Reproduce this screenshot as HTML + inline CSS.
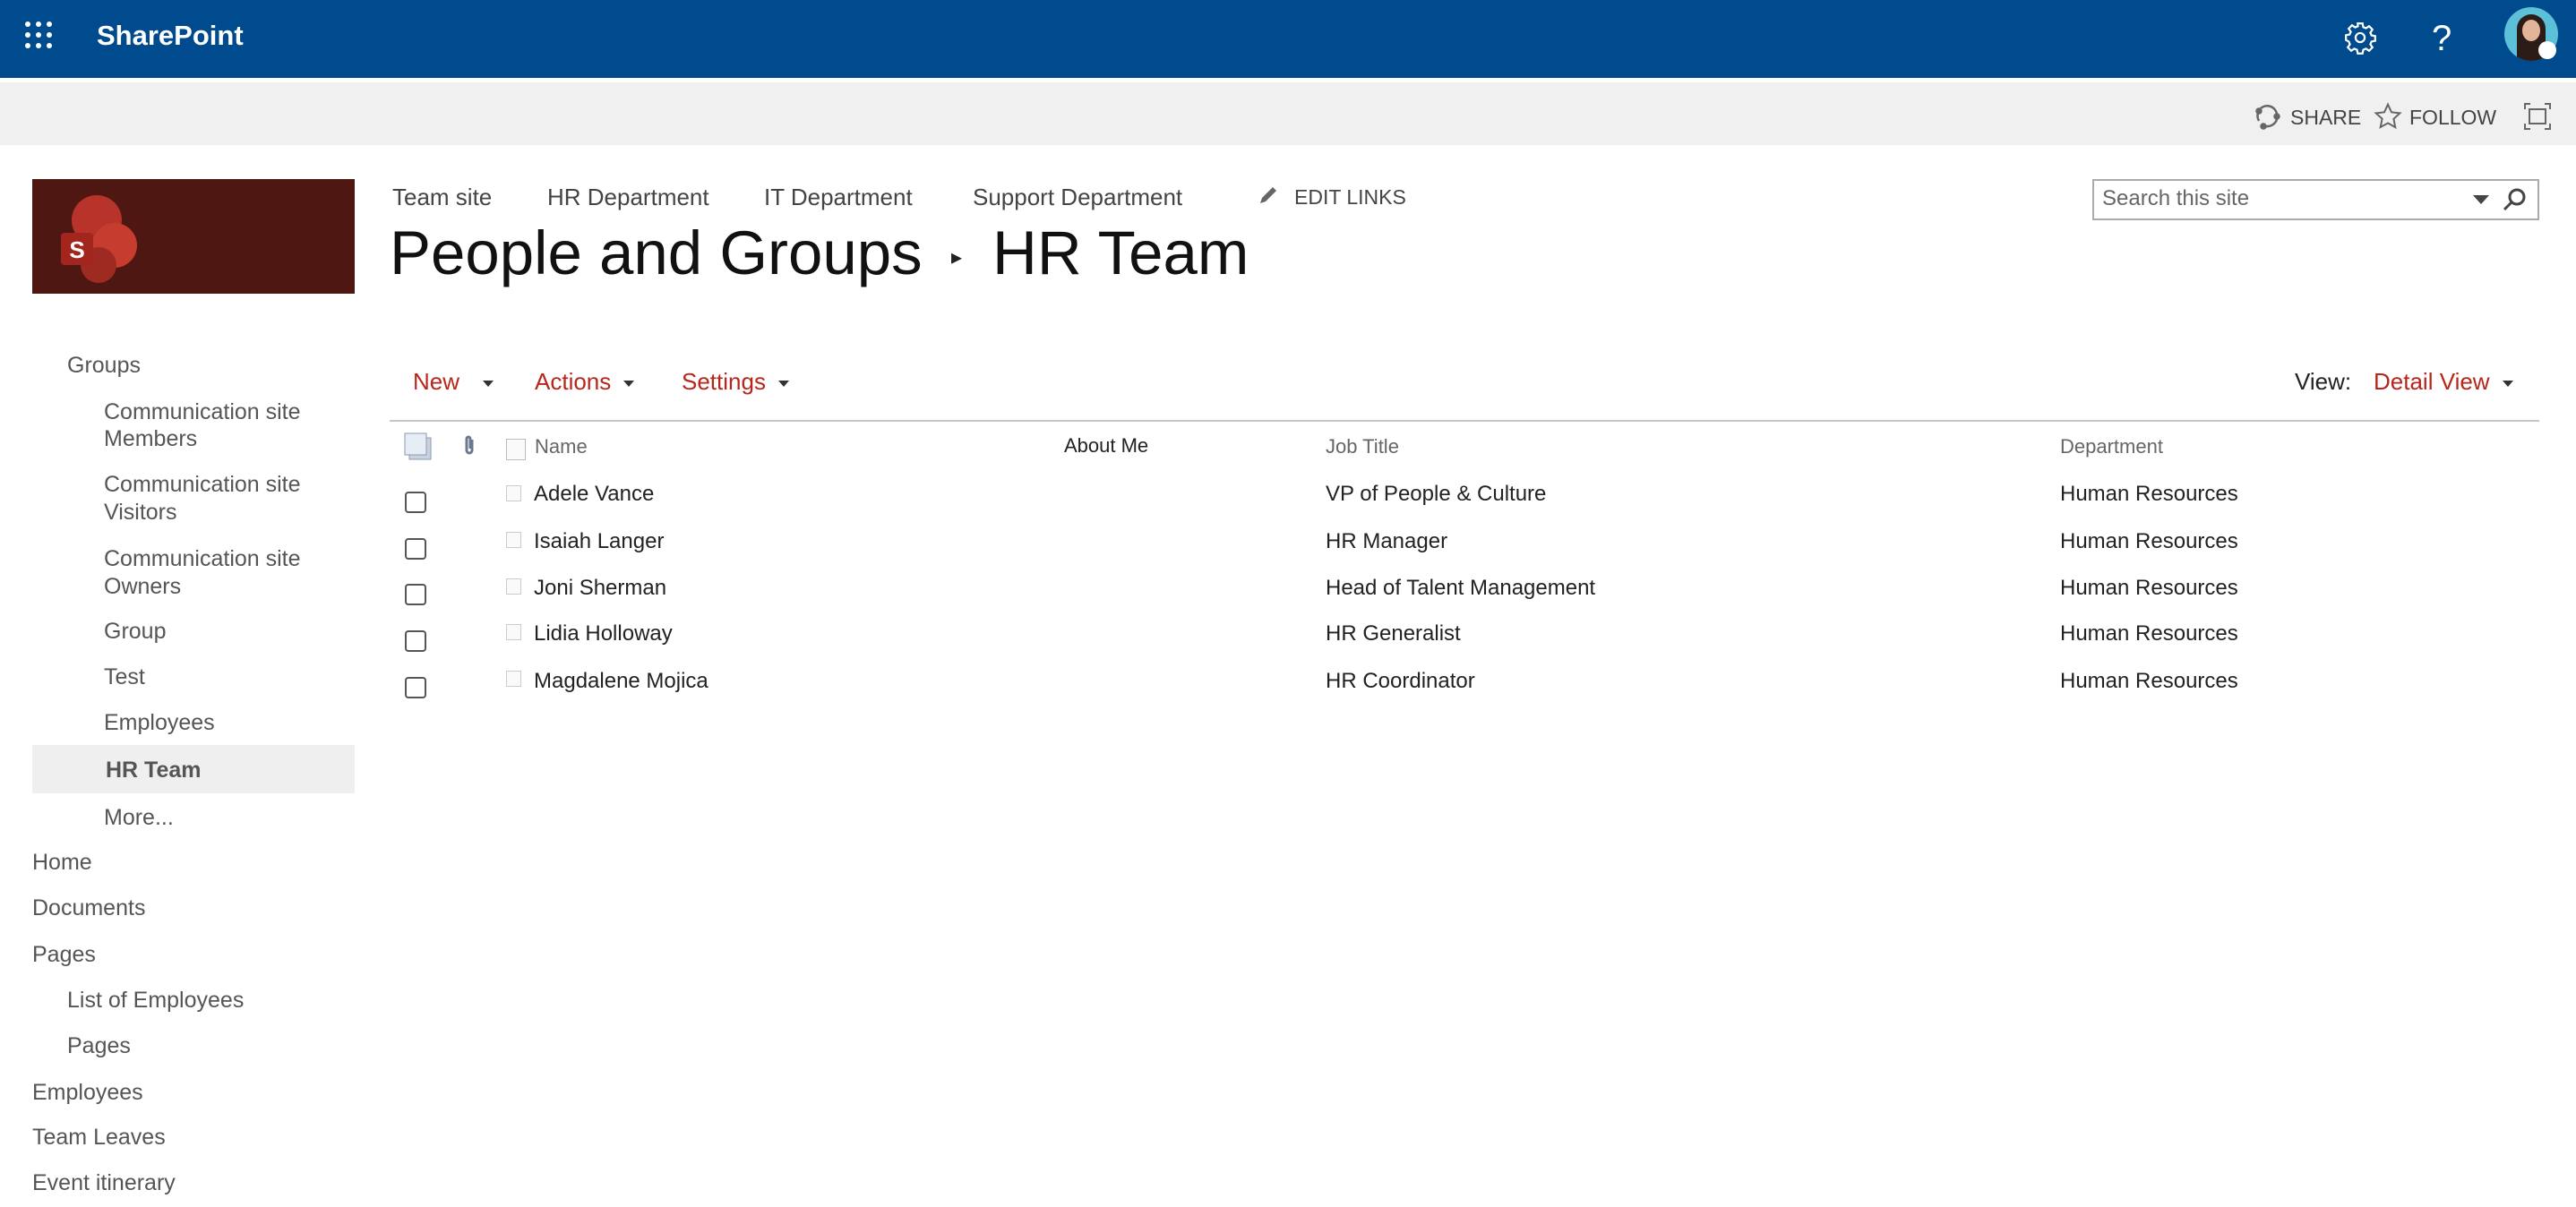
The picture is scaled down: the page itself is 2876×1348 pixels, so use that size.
<!DOCTYPE html>
<html><head><meta charset="utf-8"><style>
*{margin:0;padding:0;box-sizing:border-box}
body{width:2876px;height:1348px;overflow:hidden;background:#fff;font-family:"Liberation Sans",sans-serif;position:relative}
.t{position:absolute;white-space:nowrap;line-height:40px;height:40px}
.nav{color:#555;font-size:25px}
.row{color:#222;font-size:24px}
.hd{color:#666;font-size:22px}
.red{color:#b8261b;font-size:26px}
.cb{position:absolute;width:24px;height:24px;border:2px solid #555;border-radius:4px;left:452px}
.sq{position:absolute;width:17px;height:18px;border:1px solid #ccc;left:565px;background:#fafafa}
.arr{display:inline-block;width:0;height:0;border-left:6px solid transparent;border-right:6px solid transparent;border-top:7px solid #333;vertical-align:middle;margin-left:14px}
</style></head><body>
<div style="position:absolute;left:0;top:0;width:2876px;height:87px;background:#004b8e"></div>
<svg style="position:absolute;left:26px;top:22px" width="36" height="36" viewBox="0 0 36 36" fill="#fff">
<circle cx="5" cy="5" r="3"/><circle cx="17" cy="5" r="3"/><circle cx="29" cy="5" r="3"/>
<circle cx="5" cy="17" r="3"/><circle cx="17" cy="17" r="3"/><circle cx="29" cy="17" r="3"/>
<circle cx="5" cy="29" r="3"/><circle cx="17" cy="29" r="3"/><circle cx="29" cy="29" r="3"/></svg>
<div class="t" style="left:108px;top:20px;color:#fff;font-size:31px;font-weight:bold">SharePoint</div>
<svg style="position:absolute;left:2616px;top:23px" width="38" height="38" viewBox="0 0 24 24" fill="none" stroke="#fff" stroke-width="1.4"><circle cx="12" cy="12" r="3.2"/><path d="M10.3 2h3.4l.5 2.6 1.9.8 2.2-1.5 2.4 2.4-1.5 2.2.8 1.9 2.6.5v3.4l-2.6.5-.8 1.9 1.5 2.2-2.4 2.4-2.2-1.5-1.9.8-.5 2.6h-3.4l-.5-2.6-1.9-.8-2.2 1.5-2.4-2.4 1.5-2.2-.8-1.9L2 13.7v-3.4l2.6-.5.8-1.9-1.5-2.2 2.4-2.4 2.2 1.5 1.9-.8z"/></svg>
<div class="t" style="left:2715px;top:18px;color:#fff;font-size:40px;height:50px;line-height:50px;font-weight:lighter">?</div>
<div style="position:absolute;left:2796px;top:8px;width:60px;height:60px;border-radius:50%;background:#5bc0d8;overflow:hidden"><div style="position:absolute;left:14px;top:8px;width:32px;height:60px;border-radius:16px 16px 0 0;background:#2b1c17"></div><div style="position:absolute;left:20px;top:14px;width:20px;height:24px;border-radius:50%;background:#e2b59a"></div></div>
<div style="position:absolute;left:2834px;top:46px;width:20px;height:20px;border-radius:50%;background:#fff"></div>
<div style="position:absolute;left:0;top:92px;width:2876px;height:70px;background:#f0f0f0"></div>
<svg style="position:absolute;left:2516px;top:115px" width="30" height="30" viewBox="0 0 30 30" fill="none" stroke="#666" stroke-width="2.5"><path d="M8 6A11 11 0 0 1 26 12"/><path d="M26 18A11 11 0 0 1 14 26"/><path d="M6 20A11 11 0 0 1 5 11"/><circle cx="6" cy="9" r="2.5" fill="#666"/><circle cx="26" cy="15" r="2.5" fill="#666"/><circle cx="11" cy="26" r="2.5" fill="#666"/></svg>
<div class="t" style="left:2557px;top:111px;color:#444;font-size:23px">SHARE</div>
<svg style="position:absolute;left:2650px;top:114px" width="32" height="32" viewBox="0 0 24 24" fill="none" stroke="#666" stroke-width="1.5"><path d="M12 2l3 6.5 7 .8-5.2 4.8 1.4 7L12 17.6 5.8 21l1.4-7L2 9.3l7-.8z"/></svg>
<div class="t" style="left:2690px;top:111px;color:#444;font-size:23px">FOLLOW</div>
<svg style="position:absolute;left:2817px;top:114px" width="32" height="32" viewBox="0 0 32 32" fill="none" stroke="#666" stroke-width="2"><path d="M2 8V2h6M24 2h6v6M30 24v6h-6M8 30H2v-6"/><rect x="7" y="8" width="18" height="16"/></svg>

<div style="position:absolute;left:36px;top:200px;width:360px;height:128px;background:#4e1712"></div>
<svg style="position:absolute;left:60px;top:210px" width="110" height="112" viewBox="0 0 110 112"><circle cx="48" cy="36" r="28" fill="#b8332a"/><circle cx="68" cy="64" r="25" fill="#c63d30"/><circle cx="50" cy="86" r="20" fill="#9e2a22"/><rect x="8" y="50" width="36" height="36" rx="4" fill="#a3261e"/><text x="26" y="78" fill="#fff" font-family="Liberation Sans" font-weight="bold" font-size="26" text-anchor="middle">S</text></svg>

<div class="t nav" style="left:438px;top:200px;color:#444;font-size:26px">Team site</div>
<div class="t nav" style="left:611px;top:200px;color:#444;font-size:26px">HR Department</div>
<div class="t nav" style="left:853px;top:200px;color:#444;font-size:26px">IT Department</div>
<div class="t nav" style="left:1086px;top:200px;color:#444;font-size:26px">Support Department</div>
<svg style="position:absolute;left:1404px;top:206px" width="24" height="24" viewBox="0 0 24 24"><path d="M3 21l2-6L17 3l4 4L9 19z" fill="#666"/></svg>
<div class="t" style="left:1445px;top:200px;color:#444;font-size:23px">EDIT LINKS</div>
<div class="t" style="left:435px;top:238px;color:#111;font-size:69px;line-height:90px;height:90px">People and Groups</div>
<div class="t" style="left:1062px;top:268px;color:#222;font-size:24px">&#9656;</div>
<div class="t" style="left:1108px;top:238px;color:#111;font-size:69px;line-height:90px;height:90px">HR Team</div>

<div style="position:absolute;left:2336px;top:200px;width:499px;height:46px;border:2px solid #aaa;background:#fff"></div>
<div class="t" style="left:2347px;top:202px;color:#666;font-size:24px">Search this site</div>
<div style="position:absolute;left:2761px;top:218px;border-left:9px solid transparent;border-right:9px solid transparent;border-top:10px solid #444"></div>
<svg style="position:absolute;left:2792px;top:208px" width="30" height="30" viewBox="0 0 30 30" fill="none" stroke="#444" stroke-width="3"><circle cx="18" cy="12" r="8"/><path d="M12 18L4 26"/></svg>

<div style="position:absolute;left:36px;top:832px;width:360px;height:54px;background:#efefef"></div>
<div class="t nav" style="left:75px;top:388px">Groups</div>
<div class="t nav" style="left:116px;top:440px">Communication site</div>
<div class="t nav" style="left:116px;top:470px">Members</div>
<div class="t nav" style="left:116px;top:521px">Communication site</div>
<div class="t nav" style="left:116px;top:552px">Visitors</div>
<div class="t nav" style="left:116px;top:604px">Communication site</div>
<div class="t nav" style="left:116px;top:635px">Owners</div>
<div class="t nav" style="left:116px;top:685px">Group</div>
<div class="t nav" style="left:116px;top:736px">Test</div>
<div class="t nav" style="left:116px;top:787px">Employees</div>
<div class="t nav" style="left:118px;top:840px;font-weight:bold">HR Team</div>
<div class="t nav" style="left:116px;top:893px">More...</div>
<div class="t nav" style="left:36px;top:943px">Home</div>
<div class="t nav" style="left:36px;top:994px">Documents</div>
<div class="t nav" style="left:36px;top:1046px">Pages</div>
<div class="t nav" style="left:75px;top:1097px">List of Employees</div>
<div class="t nav" style="left:75px;top:1148px">Pages</div>
<div class="t nav" style="left:36px;top:1200px">Employees</div>
<div class="t nav" style="left:36px;top:1250px">Team Leaves</div>
<div class="t nav" style="left:36px;top:1301px">Event itinerary</div>

<div class="t red" style="left:461px;top:406px">New<span class="arr" style="margin-left:26px"></span></div>
<div class="t red" style="left:597px;top:406px">Actions<span class="arr"></span></div>
<div class="t red" style="left:761px;top:406px">Settings<span class="arr"></span></div>
<div class="t" style="left:2562px;top:406px;color:#222;font-size:26px">View:</div>
<div class="t red" style="left:2650px;top:406px">Detail View<span class="arr"></span></div>
<div style="position:absolute;left:435px;top:469px;width:2400px;height:2px;background:#c6c6c6"></div>

<svg style="position:absolute;left:450px;top:482px" width="36" height="36" viewBox="0 0 36 36"><rect x="7" y="7" width="24" height="24" fill="#c9d3e0" stroke="#8a9bb5"/><rect x="2" y="2" width="24" height="24" fill="#e7edf5" stroke="#8a9bb5"/></svg>
<svg style="position:absolute;left:516px;top:485px" width="16" height="26" viewBox="0 0 16 26" fill="none" stroke="#6a7890" stroke-width="3"><path d="M11 6v12a3 3 0 0 1-6 0V5a2 2 0 0 1 4 0v11"/></svg>
<div class="sq" style="top:490px;width:22px;height:24px;border-color:#bbb"></div>
<div class="t hd" style="left:597px;top:479px">Name</div>
<div class="t hd" style="left:1188px;top:478px;color:#222">About Me</div>
<div class="t hd" style="left:1480px;top:479px">Job Title</div>
<div class="t hd" style="left:2300px;top:479px">Department</div>

<div class="cb" style="top:549px"></div><div class="sq" style="top:542px"></div>
<div class="t row" style="left:596px;top:532px">Adele Vance</div><div class="t row" style="left:1480px;top:532px">VP of People &amp; Culture</div><div class="t row" style="left:2300px;top:532px">Human Resources</div>
<div class="cb" style="top:601px"></div><div class="sq" style="top:594px"></div>
<div class="t row" style="left:596px;top:585px">Isaiah Langer</div><div class="t row" style="left:1480px;top:585px">HR Manager</div><div class="t row" style="left:2300px;top:585px">Human Resources</div>
<div class="cb" style="top:652px"></div><div class="sq" style="top:646px"></div>
<div class="t row" style="left:596px;top:637px">Joni Sherman</div><div class="t row" style="left:1480px;top:637px">Head of Talent Management</div><div class="t row" style="left:2300px;top:637px">Human Resources</div>
<div class="cb" style="top:704px"></div><div class="sq" style="top:697px"></div>
<div class="t row" style="left:596px;top:688px">Lidia Holloway</div><div class="t row" style="left:1480px;top:688px">HR Generalist</div><div class="t row" style="left:2300px;top:688px">Human Resources</div>
<div class="cb" style="top:756px"></div><div class="sq" style="top:749px"></div>
<div class="t row" style="left:596px;top:741px">Magdalene Mojica</div><div class="t row" style="left:1480px;top:741px">HR Coordinator</div><div class="t row" style="left:2300px;top:741px">Human Resources</div>
</body></html>
